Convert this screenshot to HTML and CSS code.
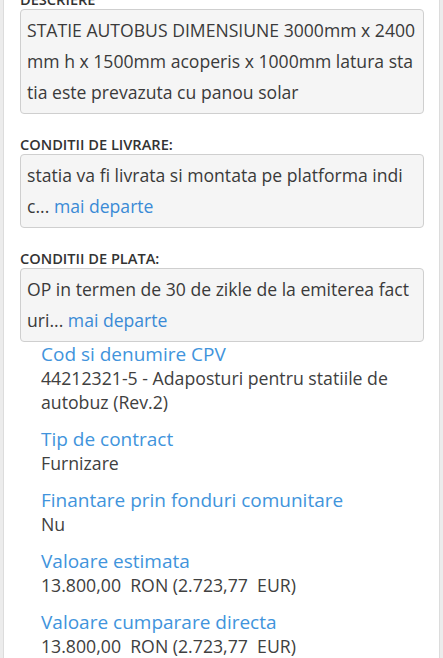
FILE: index.html
```html
<!DOCTYPE html>
<html lang="ro">
<head>
    <meta charset="UTF-8">
    <meta name="viewport" content="width=device-width, initial-scale=1.0">
    <title>Detalii achizitie</title>
    <link rel="stylesheet" href="styles.css">
</head>
<body>
    <div id="page">
        <div class="field">
            <div class="field-label">DESCRIERE</div>
            <div class="field-box">STATIE AUTOBUS DIMENSIUNE 3000mm x 2400mm h x 1500mm acoperis x 1000mm latura statia este prevazuta cu panou solar</div>
        </div>
        <div class="field">
            <div class="field-label">CONDITII DE LIVRARE:</div>
            <div class="field-box">statia va fi livrata si montata pe platforma indic... <a href="#" class="more">mai departe</a></div>
        </div>
        <div class="field">
            <div class="field-label">CONDITII DE PLATA:</div>
            <div class="field-box">OP in termen de 30 de zikle de la emiterea facturi... <a href="#" class="more">mai departe</a></div>
        </div>

        <div id="details">
            <div class="detail">
                <div class="detail-title">Cod si denumire CPV</div>
                <div class="detail-value">44212321-5 - Adaposturi pentru statiile de autobuz (Rev.2)</div>
            </div>
            <div class="detail">
                <div class="detail-title">Tip de contract</div>
                <div class="detail-value">Furnizare</div>
            </div>
            <div class="detail">
                <div class="detail-title">Finantare prin fonduri comunitare</div>
                <div class="detail-value">Nu</div>
            </div>
            <div class="detail">
                <div class="detail-title">Valoare estimata</div>
                <div class="detail-value">13.800,00&nbsp; RON (2.723,77&nbsp; EUR)</div>
            </div>
            <div class="detail">
                <div class="detail-title">Valoare cumparare directa</div>
                <div class="detail-value">13.800,00&nbsp; RON (2.723,77&nbsp; EUR)</div>
            </div>
        </div>
    </div>
</body>
</html>
```

FILE: styles.css
```css
body {
    font-family: 'Open Sans', 'Liberation Sans', sans-serif;
    margin: 0;
    padding: 0;
    background-color: #ececec;
    color: #333;
    height: 658px;
    overflow: hidden;
}
#page {
    margin: -18px 3px 0 3px;
    background: #fff;
    border-left: 1px solid #dcdcdc;
    border-right: 1px solid #dcdcdc;
    padding: 0 15px 40px 16px;
}
.field {
    margin-bottom: 13px;
}
.field-label {
    font-size: 14.6px;
    font-weight: 600;
    line-height: 18px;
    color: #333;
    margin-bottom: 1px;
    padding-top: 8px;
}
.field-box {
    background-color: #f5f5f5;
    border: 1px solid #cfcfcf;
    border-radius: 4px;
    padding: 5px 4px 5px 6px;
    font-size: 17.6px;
    line-height: 31px;
    color: #3a3a3a;
    word-break: break-all;
}
.more {
    color: #3a8ad6;
    text-decoration: none;
}
#details {
    margin-top: -13px;
    padding-left: 21px;
}
.detail {
    margin-bottom: 13px;
}
.detail-title {
    font-size: 19px;
    line-height: 24px;
    color: #4194dc;
}
.detail-value {
    font-size: 17.7px;
    line-height: 24px;
    color: #404040;
}
```
